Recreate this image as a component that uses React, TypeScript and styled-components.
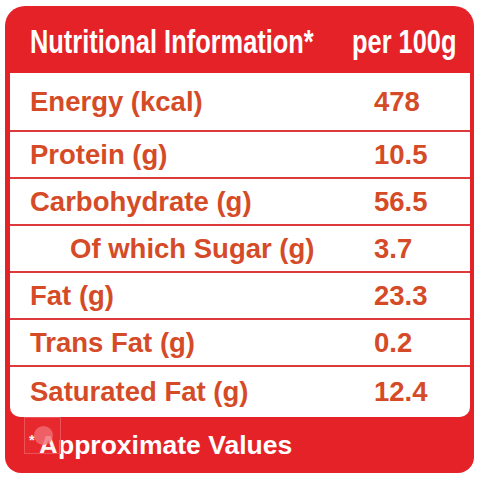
import styled, { createGlobalStyle } from "styled-components";

const rows = [
  { label: "Energy (kcal)", value: "478" },
  { label: "Protein (g)", value: "10.5" },
  { label: "Carbohydrate (g)", value: "56.5" },
  { label: "Of which Sugar (g)", value: "3.7", sub: true },
  { label: "Fat (g)", value: "23.3" },
  { label: "Trans Fat (g)", value: "0.2" },
  { label: "Saturated Fat (g)", value: "12.4" },
];

export default function App() {
  return (
    <>
      <GlobalStyle />
      <Stl.Page>
        <Stl.Card>
          <Stl.Header>
            <Stl.HeadText $width={283}>Nutritional Information*</Stl.HeadText>
            <Stl.HeadText $width={105}>per 100g</Stl.HeadText>
          </Stl.Header>
          <Stl.Table>
            {rows.map((row, i) => (
              <Stl.Row key={i} $first={i === 0} $last={i === rows.length - 1}>
                <Stl.Label $sub={row.sub}>{row.label}</Stl.Label>
                <Stl.Value>{row.value}</Stl.Value>
              </Stl.Row>
            ))}
          </Stl.Table>
          <Stl.Footer>
            <Stl.Star>*</Stl.Star>
            <span>Approximate Values</span>
            <Stl.Mark>
              <Stl.Dot />
            </Stl.Mark>
          </Stl.Footer>
        </Stl.Card>
      </Stl.Page>
    </>
  );
}

const GlobalStyle = createGlobalStyle`
  html, body {
    margin: 0;
    padding: 0;
    background: #fff;
  }
`;

const Stl = {
  Page: styled.div`
    width: 480px;
    height: 480px;
    box-sizing: border-box;
    padding: 6px 6px 7px 5px;
  `,
  Card: styled.div`
    height: 100%;
    background: #e52228;
    border-radius: 20px 20px 16px 16px;
    padding: 0 4px 0 5px;
    display: flex;
    flex-direction: column;
  `,
  Header: styled.div`
    height: 67px;
    display: flex;
    align-items: center;
    justify-content: space-between;
    padding: 4px 13px 0 20px;
    box-sizing: border-box;
  `,
  HeadText: styled.span<{ $width: number }>`
    display: inline-block;
    flex: none;
    width: ${({ $width }) => $width}px;
    white-space: nowrap;
    font-family: "Liberation Sans", Arial, sans-serif;
    font-weight: 700;
    font-size: 33px;
    color: #fff;
    transform: scaleX(0.77);
    transform-origin: left center;
  `,
  Table: styled.div`
    background: #fff;
    border-radius: 0 0 10px 10px;
    display: flex;
    flex-direction: column;
  `,
  Row: styled.div<{ $first?: boolean; $last?: boolean }>`
    display: grid;
    grid-template-columns: 1fr 96px;
    align-items: center;
    height: ${({ $first, $last }) => ($first ? "57px" : $last ? "50px" : "45px")};
    padding-top: ${({ $first }) => ($first ? "8px" : "0")};
    margin-top: ${({ $first }) => ($first ? "-8px" : "0")};
    border-bottom: ${({ $last }) => ($last ? "none" : "2px solid #dc3b3a")};
  `,
  Label: styled.span<{ $sub?: boolean }>`
    font-family: "Liberation Sans", Arial, sans-serif;
    font-weight: 700;
    font-size: 27.5px;
    color: #d54b27;
    padding-left: ${({ $sub }) => ($sub ? "60px" : "20px")};
  `,
  Value: styled.span`
    font-family: "Liberation Sans", Arial, sans-serif;
    font-weight: 700;
    font-size: 27.5px;
    color: #d54b27;
  `,
  Footer: styled.div`
    position: relative;
    flex: 1;
    display: flex;
    align-items: center;
    padding: 0 0 0 19px;
    font-family: "Liberation Sans", Arial, sans-serif;
    font-weight: 700;
    font-size: 26.5px;
    color: #fff;
  `,
  Star: styled.span`
    font-size: 15px;
    margin: -12px 4px 0 0;
  `,
  Mark: styled.div`
    position: absolute;
    left: 14px;
    top: 0;
    width: 37px;
    height: 37px;
    box-sizing: border-box;
    border: 1px solid #ec5257;
    background: rgba(255, 120, 120, 0.08);
  `,
  Dot: styled.div`
    position: absolute;
    left: 9px;
    top: 8px;
    width: 19px;
    height: 19px;
    border-radius: 50%;
    background: rgba(240, 110, 116, 0.8);
  `,
};
